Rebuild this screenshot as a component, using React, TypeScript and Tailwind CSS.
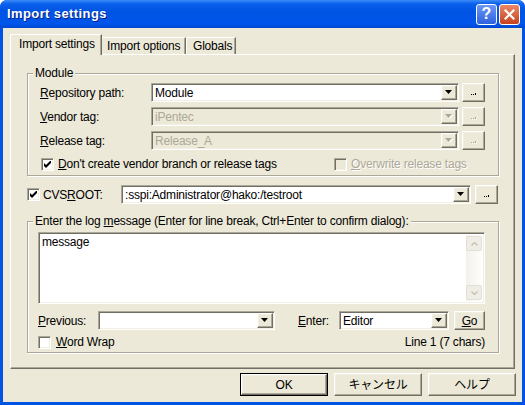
import React from "react";

const raised =
  "border border-t-white border-l-white border-r-[#716F64] border-b-[#716F64] shadow-[inset_-1px_-1px_0_#ACA899,inset_1px_1px_0_#F1EFE2]";
const sunken =
  "border border-t-[#ACA899] border-l-[#ACA899] border-r-white border-b-white shadow-[inset_1px_1px_0_#716F64,inset_-1px_-1px_0_#F1EFE2]";

const Arrow = ({ disabled }: { disabled?: boolean }) => (
  <svg width="8" height="5" viewBox="0 0 8 5" className="block">
    {disabled && <polygon points="1,1 8,1 4.5,5" fill="#fff" />}
    <polygon points="0,0 7,0 3.5,4" fill={disabled ? "#ACA899" : "#000"} />
  </svg>
);

const Check = () => (
  <svg width="7" height="7" viewBox="0 0 7 7" className="block">
    <polygon points="0,2 2,4 7,-1 7,2 2,7 0,5" fill="#000" />
  </svg>
);

const Checkbox = ({ checked, disabled }: { checked?: boolean; disabled?: boolean }) => (
  <div
    className={`w-[13px] h-[13px] shrink-0 flex items-center justify-center ${sunken} ${
      disabled ? "bg-[#ECE9D8]" : "bg-white"
    }`}
  >
    {checked && <Check />}
  </div>
);

const Combo = ({
  value,
  width,
  disabled,
}: {
  value: string;
  width: string;
  disabled?: boolean;
}) => (
  <div
    className={`${width} h-[19px] flex items-stretch p-[1px] ${sunken} ${
      disabled ? "bg-[#ECE9D8] text-[#ACA899]" : "bg-white text-black"
    }`}
  >
    <div className="flex-1 flex items-center pl-[2px] overflow-hidden whitespace-nowrap leading-none">
      {value}
    </div>
    <div className={`w-[16px] flex items-center justify-center bg-[#ECE9D8] ${raised}`}>
      <Arrow disabled={disabled} />
    </div>
  </div>
);

// the tiny "..." glyph of the browse buttons
const Dots = ({ disabled }: { disabled?: boolean }) => {
  const fill = disabled ? "#ACA899" : "#000";
  return (
    <div className={`w-[23px] h-[19px] shrink-0 flex items-end justify-center pb-[5px] bg-[#ECE9D8] ${raised}`}>
      <svg width="6" height="3" viewBox="0 0 6 3" className="block">
        {disabled && (
          <g fill="#fff">
            <rect x="1" y="2" width="1" height="1" />
            <rect x="3" y="2" width="1" height="1" />
            <rect x="5" y="2" width="1" height="1" />
            <rect x="5" y="1" width="1" height="1" />
          </g>
        )}
        <g fill={fill}>
          <rect x="0" y="1" width="1" height="1" />
          <rect x="2" y="1" width="1" height="1" />
          <rect x="4" y="1" width="1" height="1" />
          <rect x="4" y="0" width="1" height="1" />
        </g>
      </svg>
    </div>
  );
};

const Group = ({
  legend,
  className,
  children,
}: {
  legend: React.ReactNode;
  className: string;
  children: React.ReactNode;
}) => (
  <div
    className={`relative ml-[16px] border border-[#ACA899] shadow-[inset_1px_1px_0_#fff,1px_1px_0_#fff] ${className}`}
  >
    <div className="absolute -top-[8px] left-[5px] px-[2px] bg-[#ECE9D8] leading-[14px] whitespace-nowrap">
      {legend}
    </div>
    {children}
  </div>
);

const DialogButton = ({ label, isDefault }: { label: string; isDefault?: boolean }) => (
  <div className={`w-[88px] h-[23px] ${isDefault ? "border border-black" : ""} bg-[#ECE9D8]`}>
    <div className={`w-full h-full flex items-center justify-center ${raised}`}>{label}</div>
  </div>
);

export default function App() {
  return (
    <div className="w-[525px] h-[405px] bg-[#0054E3] rounded-t-[7px] flex flex-col overflow-hidden font-['Liberation_Sans','Noto_Sans_CJK_JP',sans-serif] text-[12px] tracking-[-0.2px] text-black">
      {/* title bar */}
      <div className="h-[28px] shrink-0 flex items-center pl-[7px] pr-[5px] bg-[linear-gradient(to_bottom,#3C8CF8_0%,#0A5FEC_14%,#0054E3_40%,#0055EB_85%,#0046CF_100%)]">
        <div className="flex-1 text-white font-bold text-[13px] tracking-[0.4px] [text-shadow:1px_1px_0_#0A1E80]">
          Import settings
        </div>
        <div className="w-[21px] h-[21px] rounded-[3px] border border-white bg-[linear-gradient(to_bottom,#6C97F6,#2E62DE)] flex items-center justify-center text-white font-bold text-[16px] leading-none tracking-normal">
          ?
        </div>
        <div className="w-[21px] h-[21px] ml-[2px] rounded-[3px] border border-white bg-[linear-gradient(to_bottom,#EB8868,#C6411D)] flex items-center justify-center">
          <svg width="11" height="11" viewBox="0 0 11 11">
            <path d="M1.5 1.5 L9.5 9.5 M9.5 1.5 L1.5 9.5" stroke="#fff" strokeWidth="2.2" strokeLinecap="square" />
          </svg>
        </div>
      </div>

      {/* client area */}
      <div className="flex-1 mx-[3px] mb-[3px] bg-[#ECE9D8] pt-[7px] px-[7px] flex flex-col">
        {/* tabs */}
        <div className="h-[19px] flex items-end">
          <div className="relative z-10 w-[92px] h-[21px] -mb-[1px] bg-[#ECE9D8] border-l border-t border-white border-r border-r-[#716F64] rounded-tl-[2px] shadow-[inset_-1px_0_0_#ACA899] pl-[8px] pt-[2px] leading-[14px]">
            Import settings
          </div>
          <div className="w-[84px] h-[17px] border-t border-r border-white border-r-[#716F64] shadow-[inset_-1px_0_0_#ACA899] rounded-tl-[2px] pl-[5px] pt-[1px] leading-[14px]">
            Import options
          </div>
          <div className="w-[50px] h-[17px] border-t border-l border-white border-r border-r-[#716F64] shadow-[inset_-1px_0_0_#ACA899] rounded-tl-[2px] pl-[6px] pt-[1px] leading-[14px]">
            Globals
          </div>
        </div>

        {/* tab panel */}
        <div className="h-[315px] border-l border-t border-white border-r border-b border-r-[#716F64] border-b-[#716F64] shadow-[inset_-1px_-1px_0_#ACA899] flex flex-col">
          <Group legend="Module" className="mt-[18px] w-[472px] h-[103px] pt-[9px] pl-[12px] flex flex-col gap-[5px]">
            <div className="flex items-center h-[19px]">
              <div className="w-[111px]">
                <u>R</u>epository path:
              </div>
              <Combo value="Module" width="w-[308px]" />
              <div className="ml-[3px]">
                <Dots />
              </div>
            </div>
            <div className="flex items-center h-[19px]">
              <div className="w-[111px]">
                <u>V</u>endor tag:
              </div>
              <Combo value="iPentec" width="w-[308px]" disabled />
              <div className="ml-[3px]">
                <Dots disabled />
              </div>
            </div>
            <div className="flex items-center h-[19px]">
              <div className="w-[111px]">
                <u>R</u>elease tag:
              </div>
              <Combo value="Release_A" width="w-[308px]" disabled />
              <div className="ml-[3px]">
                <Dots disabled />
              </div>
            </div>
            <div className="flex items-center h-[16px] mt-[1px] pl-[1px]">
              <div className="w-[293px] flex items-center">
                <Checkbox checked />
                <span className="ml-[4px]">
                  <u>D</u>on't create vendor branch or release tags
                </span>
              </div>
              <Checkbox disabled />
              <span className="ml-[4px] text-[#ACA899] [text-shadow:1px_1px_0_#fff]">
                <u>O</u>verwrite release tags
              </span>
            </div>
          </Group>

          {/* CVSROOT */}
          <div className="mt-[9px] ml-[16px] flex items-center h-[19px]">
            <Checkbox checked />
            <div className="ml-[3px] w-[78px]">
              CVS<u>R</u>OOT:
            </div>
            <Combo value=":sspi:Administrator@hako:/testroot" width="w-[350px]" />
            <div className="ml-[4px]">
              <Dots />
            </div>
          </div>

          <Group
            legend={
              <>
                Enter the log <u>m</u>essage (Enter for line break, Ctrl+Enter to confirm dialog):
              </>
            }
            className="mt-[17px] w-[472px] h-[132px] pt-[10px] pl-[10px] flex flex-col"
          >
            <div className={`w-[447px] h-[72px] bg-white flex p-[2px] ${sunken}`}>
              <div className="flex-1 pl-[1px] leading-[15px]">message</div>
              <div className="w-[16px] flex flex-col bg-[linear-gradient(to_right,#F3F1EC,#FEFEFB)]">
                <div className="mt-[1px] h-[15px] rounded-[2px] border border-[#E2E0D6] bg-[#EFEDE6] flex items-center justify-center">
                  <svg width="7" height="4" viewBox="0 0 7 4">
                    <path d="M0.5 3.5 L3.5 0.5 L6.5 3.5" stroke="#C5C2B4" strokeWidth="1.4" fill="none" />
                  </svg>
                </div>
                <div className="flex-1" />
                <div className="mb-[1px] h-[15px] rounded-[2px] border border-[#E2E0D6] bg-[#EFEDE6] flex items-center justify-center">
                  <svg width="7" height="4" viewBox="0 0 7 4">
                    <path d="M0.5 0.5 L3.5 3.5 L6.5 0.5" stroke="#C5C2B4" strokeWidth="1.4" fill="none" />
                  </svg>
                </div>
              </div>
            </div>

            <div className="mt-[7px] flex items-center h-[19px]">
              <div className="w-[60px]">
                <u>P</u>revious:
              </div>
              <Combo value="" width="w-[177px]" />
              <div className="ml-[23px] w-[41px]">
                <u>E</u>nter:
              </div>
              <Combo value="Editor" width="w-[110px]" />
              <div className={`ml-[5px] w-[31px] h-[19px] flex items-center justify-center bg-[#ECE9D8] ${raised}`}>
                <span>
                  <u>G</u>o
                </span>
              </div>
            </div>

            <div className="mt-[5px] w-[447px] flex items-center justify-between h-[14px]">
              <div className="flex items-center">
                <Checkbox />
                <span className="ml-[5px]">
                  <u>W</u>ord Wrap
                </span>
              </div>
              <span>Line 1 (7 chars)</span>
            </div>
          </Group>
        </div>

        {/* dialog buttons */}
        <div className="mt-[4px] flex justify-end gap-[6px] -mr-[1px]">
          <DialogButton label="OK" isDefault />
          <DialogButton label="キャンセル" />
          <DialogButton label="ヘルプ" />
        </div>
      </div>
    </div>
  );
}
